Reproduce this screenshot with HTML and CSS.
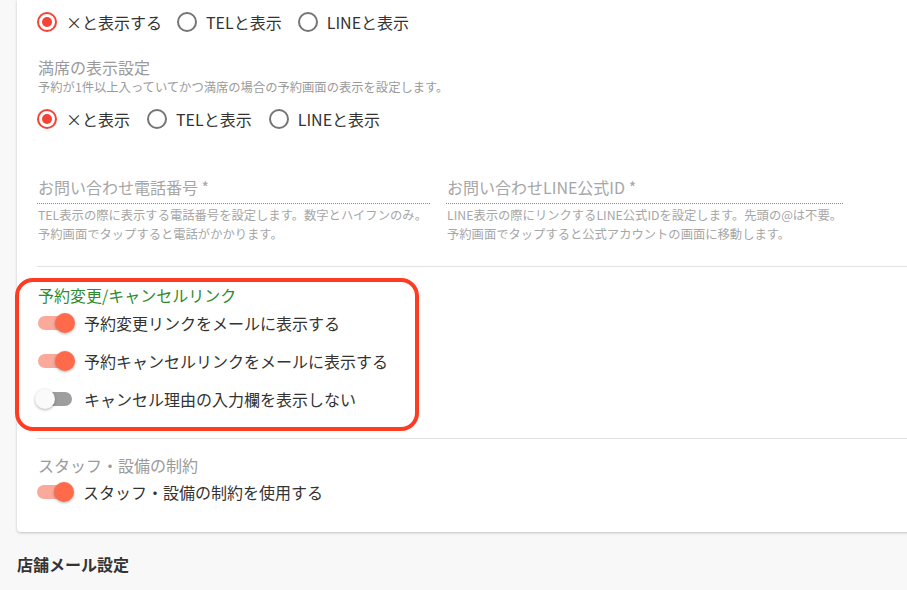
FILE: index.html
```html
<!DOCTYPE html>
<html lang="ja">
<head>
<meta charset="utf-8">
<title>予約設定</title>
<link rel="stylesheet" href="styles.css">
</head>
<body>
<div class="page">
  <section class="card">
    <div class="radio-row first-row">
      <label class="radio"><span class="dot on"></span><span>×と表示する</span></label>
      <label class="radio"><span class="dot"></span><span>TELと表示</span></label>
      <label class="radio"><span class="dot"></span><span>LINEと表示</span></label>
    </div>

    <div class="group-label">満席の表示設定</div>
    <div class="group-sub">予約が1件以上入っていてかつ満席の場合の予約画面の表示を設定します。</div>
    <div class="radio-row second-row">
      <label class="radio"><span class="dot on"></span><span>×と表示</span></label>
      <label class="radio"><span class="dot"></span><span>TELと表示</span></label>
      <label class="radio"><span class="dot"></span><span>LINEと表示</span></label>
    </div>

    <div class="fields">
      <div class="field">
        <div class="field-input">お問い合わせ電話番号 *</div>
        <p class="field-help">TEL表示の際に表示する電話番号を設定します。数字とハイフンのみ。<br>予約画面でタップすると電話がかかります。</p>
      </div>
      <div class="field">
        <div class="field-input">お問い合わせLINE公式ID *</div>
        <p class="field-help">LINE表示の際にリンクするLINE公式IDを設定します。先頭の@は不要。<br>予約画面でタップすると公式アカウントの画面に移動します。</p>
      </div>
    </div>

    <hr class="divider first-divider">

    <div class="highlight">
      <div class="green-title">予約変更/キャンセルリンク</div>
      <div class="switch-row"><span class="switch on"><span class="thumb"></span></span><span>予約変更リンクをメールに表示する</span></div>
      <div class="switch-row"><span class="switch on"><span class="thumb"></span></span><span>予約キャンセルリンクをメールに表示する</span></div>
      <div class="switch-row"><span class="switch"><span class="thumb"></span></span><span>キャンセル理由の入力欄を表示しない</span></div>
    </div>

    <hr class="divider second-divider">

    <div class="group-label staff-label">スタッフ・設備の制約</div>
    <div class="switch-row staff-row"><span class="switch on"><span class="thumb"></span></span><span>スタッフ・設備の制約を使用する</span></div>
  </section>

  <h2 class="section-title">店舗メール設定</h2>
</div>
</body>
</html>
```

FILE: styles.css
```css
* { box-sizing: border-box; }

html, body {
  margin: 0;
  padding: 0;
}

body {
  font-family: "Noto Sans CJK JP", sans-serif;
  color: #333;
  background: #f8f8f8;
}

.page {
  width: 907px;
  height: 590px;
  overflow: hidden;
  padding-left: 17px;
  background: #f8f8f8;
}

.card {
  background: #fff;
  margin-right: -30px;
  padding: 0 0 25px 20px;
  border-radius: 0 0 0 4px;
  box-shadow: 0 1px 3px rgba(0, 0, 0, 0.22);
}

/* radios */
.radio-row {
  display: flex;
  align-items: center;
  gap: 16px;
  font-size: 16px;
}
.first-row { height: 43px; }
.second-row { height: 48px; gap: 17px; }

.radio {
  display: flex;
  align-items: center;
  gap: 9px;
  font-size: 16px;
  line-height: 24px;
  color: #333;
}
.first-row .radio:first-child { margin-right: -1px; }

.dot {
  width: 20px;
  height: 20px;
  border-radius: 50%;
  border: 2px solid #757575;
  display: inline-flex;
  align-items: center;
  justify-content: center;
  flex: none;
}
.dot.on {
  border-color: #f44336;
}
.dot.on::after {
  content: "";
  width: 10px;
  height: 10px;
  border-radius: 50%;
  background: #f44336;
}

.group-label {
  margin-top: 12px;
  font-size: 16px;
  line-height: 24px;
  color: #9a9a9a;
  padding-left: 1px;
}
.group-sub {
  font-size: 12.3px;
  line-height: 16px;
  color: #9a9a9a;
  padding-left: 1px;
}

/* fields */
.fields {
  display: grid;
  grid-template-columns: 393px 397px;
  column-gap: 16px;
  padding-top: 32px;
}
.field-input {
  font-size: 16px;
  line-height: 24px;
  color: #a6a6a6;
  padding: 0 0 4px 1px;
  border-bottom: 1px dotted rgba(0, 0, 0, 0.45);
}
.field-help {
  margin: 2px 0 0;
  font-size: 12.3px;
  line-height: 19px;
  color: #a6a6a6;
  padding-left: 1px;
}

.divider {
  border: 0;
  height: 1px;
  background: #e2e2e2;
  margin: 0;
}
.first-divider { margin-top: 22px; }
.second-divider { margin-top: 7px; }

/* highlighted box */
.highlight {
  margin: 11px 0 0 -22px;
  width: 404px;
  border: 4px solid #ff3b22;
  border-radius: 18px;
  padding: 4px 0 9px 19px;
}
.green-title {
  font-size: 16px;
  line-height: 18px;
  color: #2e8b2e;
}

.switch-row {
  display: flex;
  align-items: center;
  height: 38px;
  font-size: 16px;
  color: #333;
}
.switch-row .switch + span {
  margin-left: 12px;
}

.switch {
  position: relative;
  width: 34px;
  height: 14px;
  border-radius: 7px;
  background: #9e9e9e;
  flex: none;
}
.switch.on {
  background: #fba99b;
}
.thumb {
  position: absolute;
  top: -3px;
  left: -3px;
  width: 20px;
  height: 20px;
  border-radius: 50%;
  background: #fafafa;
  box-shadow: 0 1px 3px rgba(0, 0, 0, 0.3);
}
.switch.on .thumb {
  left: 17px;
  background: #ff6a4b;
}

.staff-label { margin-top: 14px; }
.staff-row { height: 30px; }

.section-title {
  margin: 20px 0 0;
  font-size: 16px;
  line-height: 24px;
  font-weight: 700;
  color: #333;
}
```
